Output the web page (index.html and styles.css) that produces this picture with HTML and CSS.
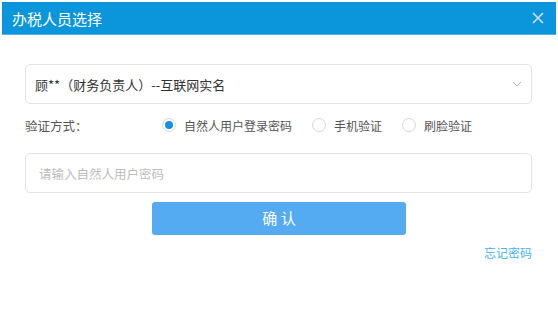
FILE: index.html
```html
<!DOCTYPE html>
<html lang="zh-CN">
<head>
<meta charset="UTF-8">
<title>办税人员选择</title>
<link rel="stylesheet" href="styles.css">
</head>
<body>

<div class="dialog">
    <div class="dialog-header">
        <span class="dialog-title">办税人员选择</span>
        <span class="close">
            <svg width="12" height="12" viewBox="0 0 12 12">
                <path d="M1 1 L11 11 M11 1 L1 11" stroke="#cddbe4" stroke-width="1.7" fill="none"/>
            </svg>
        </span>
    </div>

    <div class="dialog-body">
        <div class="select-box">
            <span>顾**（财务负责人）--互联网实名</span>
            <svg class="chevron" width="10" height="6" viewBox="0 0 10 6">
                <path d="M1 1 L5 5 L9 1" stroke="#b4b4c8" stroke-width="1" fill="none"/>
            </svg>
        </div>

        <div class="verify-row">
            <span class="verify-label">验证方式：</span>
            <div class="radio-group">
                <label class="radio checked"><span class="dot"></span>自然人用户登录密码</label>
                <label class="radio"><span class="dot"></span>手机验证</label>
                <label class="radio"><span class="dot"></span>刷脸验证</label>
            </div>
        </div>

        <div class="password-box">
            <input type="password" placeholder="请输入自然人用户密码">
        </div>

        <div class="btn-row">
            <button type="button" class="confirm">确 认</button>
        </div>

        <div class="forget-row">
            <a href="#" class="forget">忘记密码</a>
        </div>
    </div>
</div>

</body>
</html>
```

FILE: styles.css
```css
body {
    margin: 0;
    background-color: #fff;
    font-family: "Noto Sans CJK SC", "Liberation Sans", sans-serif;
}

.dialog {
    padding: 2px 2px 0 2px;
}

.dialog-header {
    height: 32px;
    background-color: #0b96dc;
    border-bottom: 1px solid #4ab4ea;
    display: flex;
    align-items: center;
    justify-content: space-between;
    padding: 0 12px 0 10px;
}

.dialog-title {
    color: #fff;
    font-size: 15px;
}

.close {
    display: flex;
    align-items: center;
}

.dialog-body {
    padding: 29px 24px 0 23px;
}

.select-box {
    height: 38px;
    border: 1px solid #e3e3e3;
    border-radius: 5px;
    display: flex;
    align-items: center;
    justify-content: space-between;
    padding: 0 9px 0 9px;
    font-size: 13px;
    color: #333;
}

.verify-row {
    display: flex;
    align-items: center;
    height: 40px;
    margin-top: 1px;
    font-size: 12px;
    color: #555;
}

.verify-label {
    width: 137px;
    font-size: 12.5px;
}

.radio-group {
    display: flex;
    align-items: center;
}

.radio {
    display: flex;
    align-items: center;
    margin-right: 20px;
}

.dot {
    width: 12px;
    height: 12px;
    border: 1px solid #d8d8d8;
    border-radius: 50%;
    margin-right: 8px;
    display: flex;
    align-items: center;
    justify-content: center;
}

.radio.checked .dot::after {
    content: "";
    width: 8px;
    height: 8px;
    border-radius: 50%;
    background-color: #1890e6;
}

.password-box {
    margin-top: 8px;
}

.password-box input {
    width: 100%;
    box-sizing: border-box;
    height: 40px;
    border: 1px solid #e3e3e3;
    border-radius: 5px;
    padding: 0 13px;
    font-family: "Noto Sans CJK SC", "Liberation Sans", sans-serif;
    font-size: 12.5px;
    outline: none;
}

.password-box input::placeholder {
    color: #bdbdbd;
}

.btn-row {
    margin-top: 9px;
    padding-left: 127px;
}

.confirm {
    width: 254px;
    height: 33px;
    border: none;
    border-radius: 3px;
    background-color: #54abf2;
    color: #fff;
    font-family: "Noto Sans CJK SC", "Liberation Sans", sans-serif;
    font-size: 15px;
    line-height: 30px;
    padding-bottom: 3px;
    cursor: pointer;
}

.forget-row {
    display: flex;
    justify-content: flex-end;
    margin-top: 9px;
}

.forget {
    color: #4bb2ea;
    font-size: 12px;
    text-decoration: none;
}
```
